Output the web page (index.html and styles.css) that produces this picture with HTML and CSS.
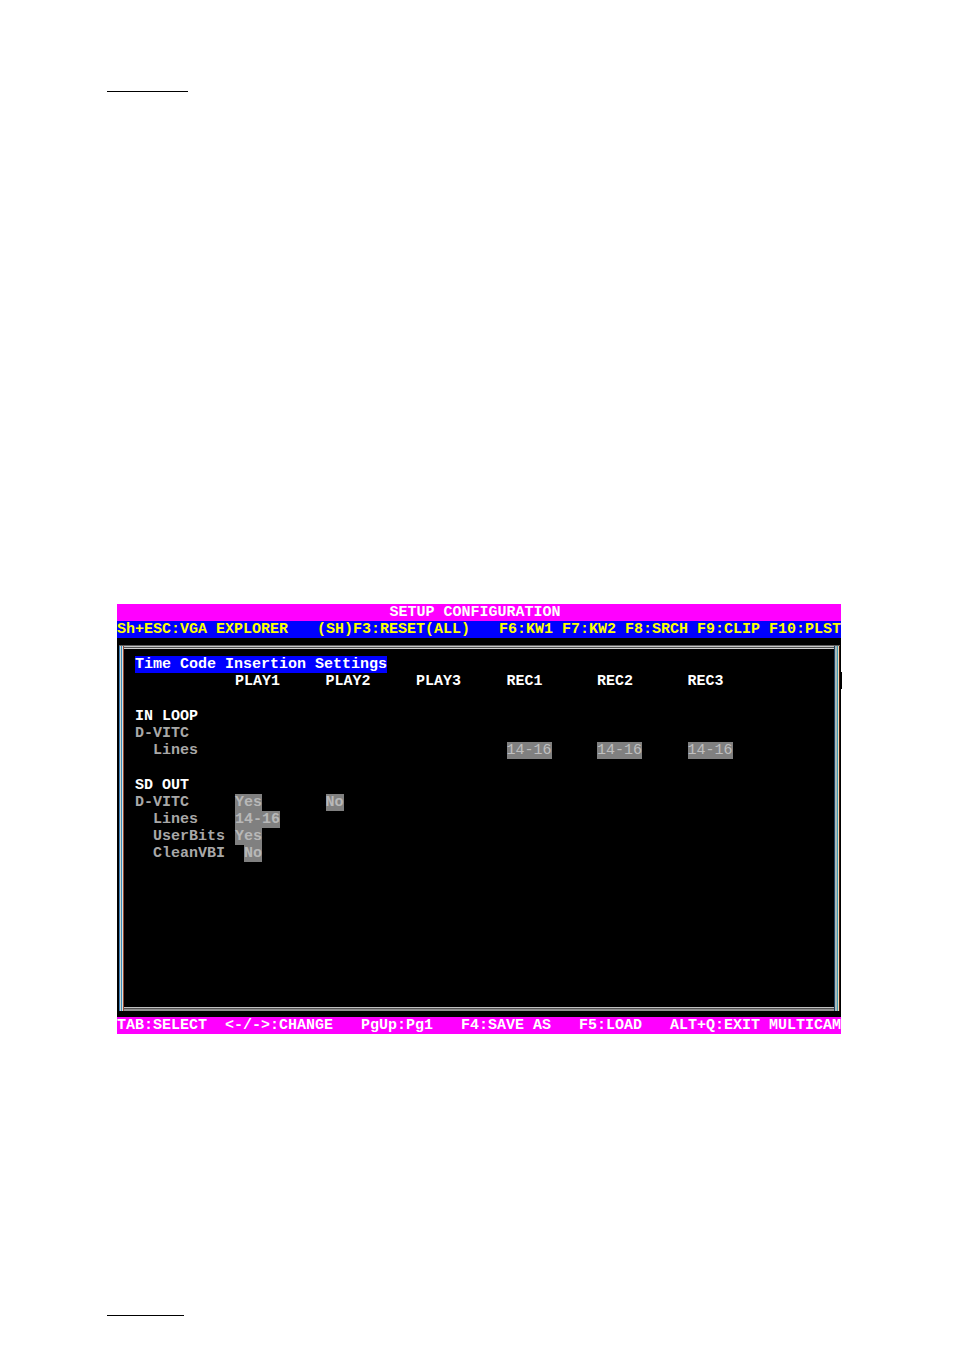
FILE: index.html
```html
<!DOCTYPE html>
<html lang="en">
<head>
    <meta charset="UTF-8">
    <meta name="viewport" content="width=device-width, initial-scale=1.0">
    <title>Setup Configuration</title>
    <link rel="stylesheet" href="styles.css">
</head>
<body>
    <header class="page-header">
        <hr class="rule rule-top">
    </header>

    <main class="screen">
        <h1 class="bar title">SETUP CONFIGURATION</h1>
        <nav class="bar menu">
            <button>Sh+ESC:VGA EXPLORER</button>
            <button>(SH)F3:RESET(ALL)</button>
            <div class="group">
                <button>F6:KW1</button>
                <button>F7:KW2</button>
                <button>F8:SRCH</button>
                <button>F9:CLIP</button>
                <button>F10:PLST</button>
            </div>
        </nav>

        <div class="frame">
            <div class="frame-inner">
                <h2 class="section-title">Time Code Insertion Settings</h2>
                <table class="settings">
                    <tr>
                        <td class="label"></td>
                        <th scope="col">PLAY1</th>
                        <th scope="col">PLAY2</th>
                        <th scope="col">PLAY3</th>
                        <th scope="col">REC1</th>
                        <th scope="col">REC2</th>
                        <th scope="col">REC3</th>
                    </tr>
                    <tr class="spacer"><td colspan="7"></td></tr>
                    <tr><th scope="rowgroup" colspan="7">IN LOOP</th></tr>
                    <tr><td colspan="7">D-VITC</td></tr>
                    <tr>
                        <td class="sub">Lines</td>
                        <td></td>
                        <td></td>
                        <td></td>
                        <td><button class="value thin">14-16</button></td>
                        <td><button class="value thin">14-16</button></td>
                        <td><button class="value thin">14-16</button></td>
                    </tr>
                    <tr class="spacer"><td colspan="7"></td></tr>
                    <tr><th scope="rowgroup" colspan="7">SD OUT</th></tr>
                    <tr>
                        <td>D-VITC</td>
                        <td><button class="value">Yes</button></td>
                        <td><button class="value">No</button></td>
                        <td colspan="4"></td>
                    </tr>
                    <tr>
                        <td class="sub">Lines</td>
                        <td><button class="value">14-16</button></td>
                        <td colspan="5"></td>
                    </tr>
                    <tr>
                        <td class="sub">UserBits</td>
                        <td><button class="value">Yes</button></td>
                        <td colspan="5"></td>
                    </tr>
                    <tr>
                        <td class="sub">CleanVBI</td>
                        <td class="indent"><button class="value">No</button></td>
                        <td colspan="5"></td>
                    </tr>
                </table>
            </div>
        </div>

        <nav class="bar keys">
            <div class="group wide">
                <button>TAB:SELECT</button>
                <button>&lt;-/-&gt;:CHANGE</button>
            </div>
            <button>PgUp:Pg1</button>
            <button>F4:SAVE AS</button>
            <button>F5:LOAD</button>
            <button>ALT+Q:EXIT MULTICAM</button>
        </nav>
        <span class="cursor"></span>
    </main>

    <footer class="page-footer">
        <hr class="rule rule-bottom">
    </footer>
</body>
</html>
```

FILE: styles.css
```css
* {
    box-sizing: border-box;
}
body {
    margin: 0;
    padding: 91px 107px 34px;
    background-color: #fff;
    font-family: "Liberation Mono", "Courier New", monospace;
    font-size: 15px;
    line-height: 17px;
}
.rule {
    margin: 0;
    border: 0;
    height: 1px;
    background-color: #000;
}
.rule-top {
    width: 81px;
}
.rule-bottom {
    width: 77px;
}
.page-header {
    margin-bottom: 512px;
}
.page-footer {
    margin-top: 281px;
}
button {
    margin: 0;
    padding: 0;
    border: 0;
    background: none;
    color: inherit;
    font: inherit;
    white-space: pre;
    cursor: pointer;
}

/* terminal screen */
.screen {
    position: relative;
    margin: 0 6px 0 10px;
    background-color: #000;
    color: #fff;
    font-weight: bold;
}
.bar {
    display: flex;
    justify-content: space-between;
    height: 17px;
    margin: 0;
    font-size: 15px;
    font-weight: bold;
    line-height: 17px;
}
.title {
    justify-content: center;
    padding-right: 8px;
    background-color: #f0f;
}
.menu {
    background-color: #00f;
    color: #ff0;
}
.keys {
    background-color: #f0f;
}
.group {
    display: flex;
    gap: 9px;
}
.group.wide {
    gap: 18px;
}

/* double line frame, the side lines have coloured fringes */
.frame {
    margin: 7px 1px 6px 2px;
    padding: 4px 6px 4px 5px;
    background-image:
        linear-gradient(to right, #3a7cb4 1px, #d8d8c8 1px 2px, #3a8cc0 2px 3px, #d8e0d8 3px 4px, #904838 4px),
        linear-gradient(to right, #204060 1px, #a8b8b8 1px 3px, #4098b0 3px 4px, #f0d8b0 4px 5px, #401810 5px),
        linear-gradient(to bottom, #606060 1px, #c8c8c8 1px 2px, #505050 2px 3px, #d0d0d0 3px),
        linear-gradient(to bottom, #c0c0c0 1px, #505050 1px 2px, #909090 2px);
    background-position: left 1px, right 1px, top, bottom;
    background-size: 5px 100%, 6px 100%, 100% 4px, 100% 4px;
    background-repeat: no-repeat;
}
.frame-inner {
    min-height: 358px;
    padding: 7px 56px 0 11px;
}
.section-title {
    display: inline-block;
    margin: 0;
    background-color: #00f;
    font-size: 15px;
    font-weight: bold;
    line-height: 17px;
    vertical-align: top;
}
.settings {
    width: 100%;
    table-layout: fixed;
    border-collapse: collapse;
    color: #a8a8a8;
}
.settings th,
.settings td {
    height: 17px;
    padding: 0;
    text-align: left;
    white-space: nowrap;
}
.settings th {
    color: #fff;
}
.settings .spacer td {
    height: 18px;
}
.settings .label {
    width: 100px;
}
.settings .sub {
    padding-left: 18px;
}
.settings .indent {
    padding-left: 9px;
}
.value {
    display: block;
    height: 17px;
    background-color: #808080;
    color: #b8b8b8;
}
.value.thin {
    color: #c0c0c0;
    font-weight: normal;
}
.cursor {
    position: absolute;
    top: 68px;
    right: -1px;
    width: 1px;
    height: 17px;
    background-color: #000;
}
```
